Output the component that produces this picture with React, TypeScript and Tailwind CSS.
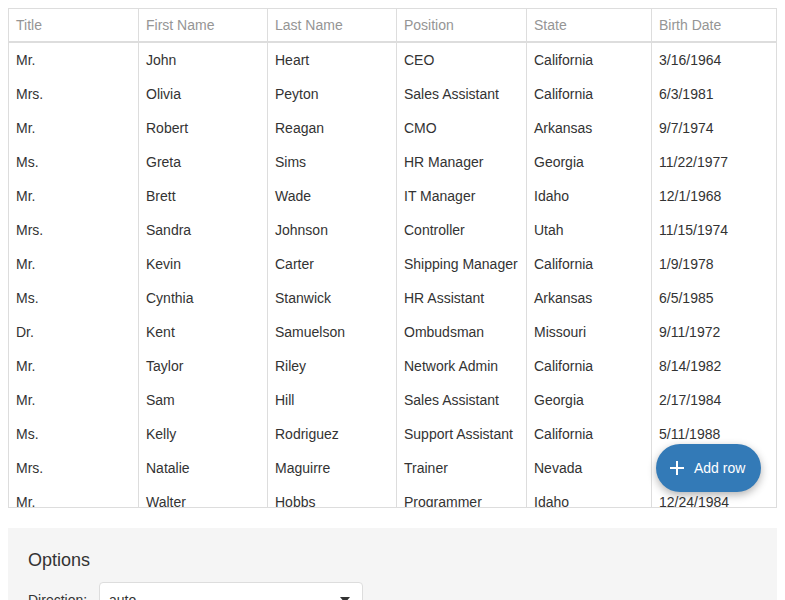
import React from 'react';

type Employee = {
    title: string;
    first: string;
    last: string;
    position: string;
    state: string;
    birth: string;
};

const employees: Employee[] = [
    { title: 'Mr.', first: 'John', last: 'Heart', position: 'CEO', state: 'California', birth: '3/16/1964' },
    { title: 'Mrs.', first: 'Olivia', last: 'Peyton', position: 'Sales Assistant', state: 'California', birth: '6/3/1981' },
    { title: 'Mr.', first: 'Robert', last: 'Reagan', position: 'CMO', state: 'Arkansas', birth: '9/7/1974' },
    { title: 'Ms.', first: 'Greta', last: 'Sims', position: 'HR Manager', state: 'Georgia', birth: '11/22/1977' },
    { title: 'Mr.', first: 'Brett', last: 'Wade', position: 'IT Manager', state: 'Idaho', birth: '12/1/1968' },
    { title: 'Mrs.', first: 'Sandra', last: 'Johnson', position: 'Controller', state: 'Utah', birth: '11/15/1974' },
    { title: 'Mr.', first: 'Kevin', last: 'Carter', position: 'Shipping Manager', state: 'California', birth: '1/9/1978' },
    { title: 'Ms.', first: 'Cynthia', last: 'Stanwick', position: 'HR Assistant', state: 'Arkansas', birth: '6/5/1985' },
    { title: 'Dr.', first: 'Kent', last: 'Samuelson', position: 'Ombudsman', state: 'Missouri', birth: '9/11/1972' },
    { title: 'Mr.', first: 'Taylor', last: 'Riley', position: 'Network Admin', state: 'California', birth: '8/14/1982' },
    { title: 'Mr.', first: 'Sam', last: 'Hill', position: 'Sales Assistant', state: 'Georgia', birth: '2/17/1984' },
    { title: 'Ms.', first: 'Kelly', last: 'Rodriguez', position: 'Support Assistant', state: 'California', birth: '5/11/1988' },
    { title: 'Mrs.', first: 'Natalie', last: 'Maguirre', position: 'Trainer', state: 'Nevada', birth: '10/13/1977' },
    { title: 'Mr.', first: 'Walter', last: 'Hobbs', position: 'Programmer', state: 'Idaho', birth: '12/24/1984' },
];

const headers = ['Title', 'First Name', 'Last Name', 'Position', 'State', 'Birth Date'];

const cols = 'grid grid-cols-[129px_129px_129px_130px_125px_125px]';

const App = () => {
    return (
        <div className="h-[600px] overflow-hidden bg-white p-2 font-['Liberation_Sans',Arial,sans-serif] text-[14px]">
            {/* Grid */}
            <div className="relative h-[500px] border border-[#ddd]">
                <div className="h-full overflow-hidden">
                    <div className={`${cols} h-[34px] border-b-2 border-[#ddd] text-[#959595]`}>
                        {headers.map((h, i) => (
                            <div
                                key={h}
                                className={`flex items-center px-[7px] ${i > 0 ? 'border-l border-[#ddd]' : ''}`}
                            >
                                {h}
                            </div>
                        ))}
                    </div>
                    <div className="text-[#333]">
                        {employees.map((e) => (
                            <div key={e.first} className={`${cols} h-[34px]`}>
                                {[e.title, e.first, e.last, e.position, e.state, e.birth].map((v, i) => (
                                    <div
                                        key={i}
                                        className={`flex items-center whitespace-nowrap px-[7px] pt-px ${i > 0 ? 'border-l border-[#ddd]' : ''}`}
                                    >
                                        {v}
                                    </div>
                                ))}
                            </div>
                        ))}
                    </div>
                </div>

                {/* Floating action button */}
                <button className="absolute right-[15px] bottom-[15px] flex h-12 w-[105px] items-center gap-[9px] rounded-full bg-[#337ab7] pl-[13px] text-white shadow-[0_3px_8px_rgba(0,0,0,0.3)]">
                    <svg width="16" height="16" viewBox="0 0 16 16" fill="none">
                        <path d="M8 1v14M1 8h14" stroke="white" strokeWidth="2" />
                    </svg>
                    <span>Add row</span>
                </button>
            </div>

            {/* Options panel */}
            <div className="mt-5 bg-[#f5f5f5] p-5">
                <div className="text-[18px] leading-6 text-[#333]">Options</div>
                <div className="mt-[10px] flex items-center text-[#333]">
                    <span className="w-[71px]">Direction:</span>
                    <div className="flex h-9 w-[264px] items-center justify-between rounded border border-[#ddd] bg-white pl-[9px] pr-[12px]">
                        <span>auto</span>
                        <svg width="10" height="6" viewBox="0 0 10 6">
                            <path d="M0 0h10L5 6z" fill="#333" />
                        </svg>
                    </div>
                </div>
            </div>
        </div>
    );
};

export default App;
